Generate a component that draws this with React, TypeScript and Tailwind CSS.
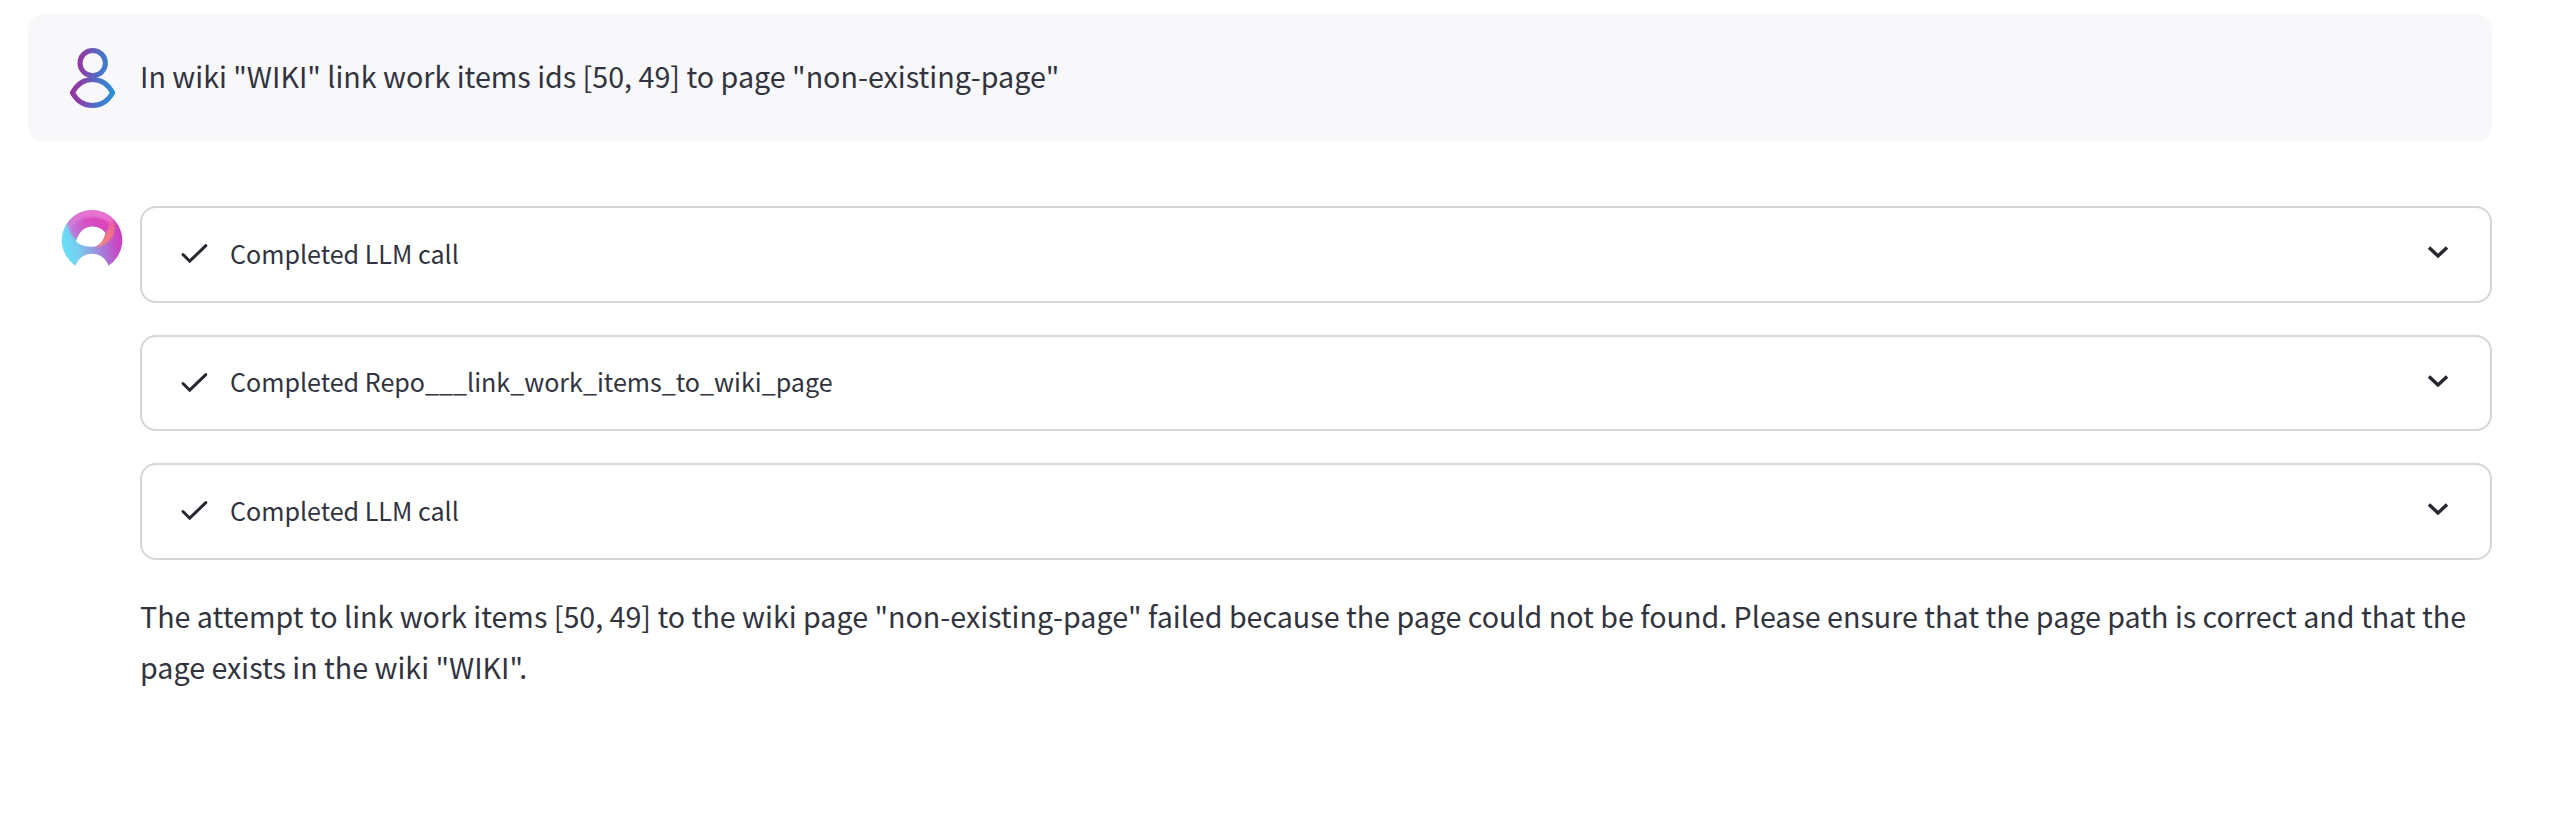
import React from "react";

const steps = [
  "Completed LLM call",
  "Completed Repo___link_work_items_to_wiki_page",
  "Completed LLM call",
];

function UserAvatar() {
  return (
    <svg className="h-16 w-16 shrink-0" viewBox="0 0 64 64" fill="none">
      <defs>
        <linearGradient id="user" gradientUnits="userSpaceOnUse" x1="10" y1="30" x2="55" y2="34">
          <stop offset="0" stopColor="#98309c" />
          <stop offset="0.25" stopColor="#8b3fa8" />
          <stop offset="0.62" stopColor="#4d6fc8" />
          <stop offset="1" stopColor="#2b90d4" />
        </linearGradient>
      </defs>
      <g stroke="url(#user)" strokeWidth="5" strokeLinejoin="round">
        <circle cx="32.7" cy="17.1" r="12.7" />
        <path d="M12.4 46.8C17 38.5 24.5 33.6 32.5 33.6S48 38.5 52.7 46.8C48 55 40.500 59.600 32.500 59.600S17 55 12.400 46.800Z" />
      </g>
    </svg>
  );
}

function AssistantAvatar() {
  return (
    <svg className="h-16 w-16 shrink-0" viewBox="0 -1.500 64 64">
      <defs>
        <linearGradient id="base" gradientUnits="userSpaceOnUse" x1="3" y1="42" x2="62" y2="30">
          <stop offset="0" stopColor="#66e2f8" />
          <stop offset="0.25" stopColor="#78ccef" />
          <stop offset="0.6" stopColor="#a184dc" />
          <stop offset="0.85" stopColor="#c64fc8" />
          <stop offset="1" stopColor="#cf3cbd" />
        </linearGradient>
        <linearGradient id="top" gradientUnits="userSpaceOnUse" x1="8" y1="28" x2="40" y2="6">
          <stop offset="0" stopColor="#b98be0" />
          <stop offset="0.45" stopColor="#e073d2" />
          <stop offset="1" stopColor="#e872ce" />
        </linearGradient>
        <linearGradient id="inner" gradientUnits="userSpaceOnUse" x1="12" y1="26" x2="46" y2="14">
          <stop offset="0" stopColor="#b47fd8" />
          <stop offset="0.45" stopColor="#d84fc4" />
          <stop offset="1" stopColor="#dc43be" />
        </linearGradient>
        <linearGradient id="coral" gradientUnits="userSpaceOnUse" x1="52" y1="14" x2="38" y2="39">
          <stop offset="0" stopColor="#ea629f" />
          <stop offset="0.5" stopColor="#f5797f" />
          <stop offset="1" stopColor="#f88b72" />
        </linearGradient>
        <filter id="soft">
          <feGaussianBlur stdDeviation="0.8" />
        </filter>
        <clipPath id="ring">
          <path clipRule="evenodd" d="M15.500 58.200A30.300 30.300 0 1 1 48.500 58.200C46 51 39.500 46.200 32 46.200S18 51 15.500 58.200ZM16 33.500C19 24 24.500 19 32 19C38.500 19 43 21.500 45.500 25.500C44 32 41 36.500 36 38.800C28 40.200 19.500 38 16 33.500Z" />
        </clipPath>
      </defs>
      <g clipPath="url(#ring)">
        <path fill="url(#base)" d="M0 0H64V64H0Z" />
        <g filter="url(#soft)">
          <path fill="url(#top)" d="M0 0H48L54 12C50 16 46 20 44 26L32 18L18 32C14 30 9 25 7.500 17Z" />
          <path fill="url(#inner)" d="M10 23C16 12 24 9.500 32 9.500S46 12 50 16L45 28L32 18L18 33C14 31 11 27 10 23Z" />
          <path fill="url(#coral)" d="M52 11.500C58 18 54 29 48 34C44 37.500 40 39.500 35 39.500C42 35 46 28 50 16Z" />
        </g>
      </g>
    </svg>
  );
}

function Step({ label }: { label: string }) {
  return (
    <div className="flex h-[96.500px] items-center rounded-2xl border-2 border-[#d6d6d8] pr-[42px] pb-0.5 pl-[37px]">
      <svg className="h-8 w-8 shrink-0" viewBox="0 0 32 32" fill="none" stroke="#262730" strokeWidth="3" strokeLinecap="round">
        <path d="M4 17.500L10.700 24.200L26.800 8.600" />
      </svg>
      <span className="ml-[19px] grow text-[25.070px] leading-[45px] whitespace-nowrap">{label}</span>
      <svg className="h-5 w-5 shrink-0" viewBox="0 0 20 20" fill="none" stroke="#262730" strokeWidth="3.400">
        <path d="M1 4.500L10 13L19 4.500" />
      </svg>
    </div>
  );
}

export default function App() {
  return (
    <main className="h-[816px] w-[2564px] bg-white pt-3.5 pl-7 font-['Noto_Sans_CJK_SC',sans-serif] text-[#31333f]">
      <section className="flex h-32 w-[2464px] items-center gap-4 rounded-2xl bg-[#f8f8fa] px-8">
        <UserAvatar />
        <p className="pb-[5px] text-[28.660px] leading-[51px] whitespace-nowrap">
          In wiki "WIKI" link work items ids [50, 49] to page "non-existing-page"
        </p>
      </section>
      <section className="mt-16 flex w-[2464px] gap-4 pl-8">
        <AssistantAvatar />
        <div className="flex grow flex-col gap-8">
          {steps.map((label, i) => (
            <Step key={i} label={label} />
          ))}
          <p className="-mt-0.5 text-[28.650px] leading-[51px] whitespace-nowrap">
            The attempt to link work items [50, 49] to the wiki page "non-existing-page" failed because the page could not be found. Please ensure that the page path is correct and that the
            <br />
            page exists in the wiki "WIKI".
          </p>
        </div>
      </section>
    </main>
  );
}
